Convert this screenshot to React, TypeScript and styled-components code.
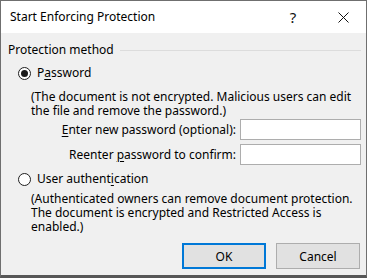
import React from "react";
import styled, { createGlobalStyle } from "styled-components";

const Global = createGlobalStyle`
  html, body { margin: 0; padding: 0; background: #f0f0f0; }
  * { box-sizing: border-box; }
`;

const Window = styled.div`
  width: 367px;
  height: 278px;
  border: 1px solid #6f6f6f;
  border-bottom: 3px solid #575757;
  background: #f0f0f0;
  display: flex;
  flex-direction: column;
  font-family: "Segoe UI", "Noto Sans", sans-serif;
  font-size: 12px;
  color: #000;
  overflow: hidden;
`;

const TitleBar = styled.div`
  height: 32px;
  flex: none;
  background: #fff;
  display: flex;
  align-items: center;
  padding-left: 9px;
`;

const Title = styled.div`
  flex: 1;
  font-size: 12px;
  line-height: 16px;
`;

const CaptionButton = styled.div<{ $padRight?: number }>`
  width: 46px;
  height: 32px;
  display: flex;
  align-items: center;
  justify-content: center;
  padding-right: ${(p) => p.$padRight ?? 0}px;
  font-size: 15px;
  color: #111;
`;

const Body = styled.div`
  flex: 1;
  display: flex;
  flex-direction: column;
  padding: 10px 5px 0 7px;
`;

const GroupHeader = styled.div`
  display: flex;
  align-items: center;
  height: 14px;
  line-height: 14px;
  &::after {
    content: "";
    flex: 1;
    height: 1px;
    background: #dcdcdc;
    margin-left: 6px;
  }
`;

const RadioRow = styled.label<{ $mt: number }>`
  display: flex;
  align-items: center;
  gap: 6px;
  height: 16px;
  line-height: 16px;
  margin-top: ${(p) => p.$mt}px;
  padding-left: 10px;
`;

const RadioCircle = styled.span<{ $checked?: boolean }>`
  width: 13px;
  height: 13px;
  border-radius: 50%;
  border: 1px solid #1f1f1f;
  background: #fff;
  display: flex;
  align-items: center;
  justify-content: center;
  &::after {
    content: "";
    width: 7px;
    height: 7px;
    border-radius: 50%;
    background: #1a1a1a;
    display: ${(p) => (p.$checked ? "block" : "none")};
  }
`;

const Description = styled.div<{ $mt: number }>`
  margin-top: ${(p) => p.$mt}px;
  padding-left: 23px;
  line-height: 14px;
`;

const FieldRow = styled.div<{ $mt: number }>`
  display: flex;
  justify-content: flex-end;
  align-items: center;
  gap: 4px;
  height: 21px;
  margin-top: ${(p) => p.$mt}px;
`;

const TextBox = styled.input`
  width: 121px;
  height: 21px;
  border: 1px solid #adadad;
  background: #fff;
  padding: 0 3px;
  font: inherit;
  outline: none;
`;

const ButtonRow = styled.div`
  display: flex;
  justify-content: flex-end;
  gap: 10px;
  margin-top: 9px;
  padding-right: 1px;
`;

const Button = styled.button<{ $default?: boolean }>`
  width: 84px;
  height: 26px;
  background: #e1e1e1;
  border: ${(p) => (p.$default ? "2px solid #0078d7" : "1px solid #adadad")};
  font: inherit;
  color: #000;
  padding: 0;
`;

const Key = styled.span`
  text-decoration: underline;
  text-underline-offset: 2px;
`;

export default function App() {
  return (
    <>
      <Global />
      <Window>
        <TitleBar>
          <Title>Start Enforcing Protection</Title>
          <CaptionButton $padRight={8}>?</CaptionButton>
          <CaptionButton>
            <svg width="11" height="11" viewBox="0 0 11 11">
              <path d="M0.5 0.5 L10.5 10.5 M10.5 0.5 L0.5 10.5" stroke="#111" strokeWidth="1" />
            </svg>
          </CaptionButton>
        </TitleBar>
        <Body>
          <GroupHeader>Protection method</GroupHeader>
          <RadioRow $mt={8}>
            <RadioCircle $checked />
            <span>
              P<Key>a</Key>ssword
            </span>
          </RadioRow>
          <Description $mt={9}>
            (The document is not encrypted. Malicious users can edit
            <br />
            the file and remove the password.)
          </Description>
          <FieldRow $mt={1}>
            <span>
              <Key>E</Key>nter new password (optional):
            </span>
            <TextBox type="password" />
          </FieldRow>
          <FieldRow $mt={4}>
            <span>
              Reenter <Key>p</Key>assword to confirm:
            </span>
            <TextBox type="password" />
          </FieldRow>
          <RadioRow $mt={6}>
            <RadioCircle />
            <span>
              User authent<Key>i</Key>cation
            </span>
          </RadioRow>
          <Description $mt={5}>
            (Authenticated owners can remove document protection.
            <br />
            The document is encrypted and Restricted Access is
            <br />
            enabled.)
          </Description>
          <ButtonRow>
            <Button $default>OK</Button>
            <Button>Cancel</Button>
          </ButtonRow>
        </Body>
      </Window>
    </>
  );
}
